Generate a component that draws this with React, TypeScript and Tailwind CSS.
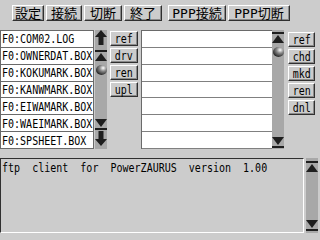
import React from 'react';

const font = "font-['DejaVu_Sans_Mono','Noto_Sans_CJK_JP',monospace]";

const Bm: React.FC<{ children: React.ReactNode; center?: boolean }> = ({ children, center }) => (
  <span
    className={
      center
        ? 'inline-block origin-center scale-x-[0.77] text-[13px] leading-none whitespace-pre'
        : 'inline-block origin-left scale-x-[0.77] text-[13px] leading-none whitespace-pre'
    }
  >
    {children}
  </span>
);

const UpArrow = () => (
  <svg width="12" height="15" viewBox="0 0 12 15">
    <path d="M6 0L12 7H8.5V15H3.5V7H0Z" fill="#1e1e1e" />
  </svg>
);

const DownArrow = () => (
  <svg width="12" height="15" viewBox="0 0 12 15">
    <path d="M6 15L12 8H8.5V0H3.5V8H0Z" fill="#1e1e1e" />
  </svg>
);

const TopIcon = () => (
  <svg width="12" height="11" viewBox="0 0 12 11">
    <rect x="0" y="0" width="12" height="2" fill="#1e1e1e" />
    <path d="M6 3L12 11H0Z" fill="#1e1e1e" />
  </svg>
);

const BottomIcon = () => (
  <svg width="12" height="11" viewBox="0 0 12 11">
    <path d="M0 0H12L6 8Z" fill="#1e1e1e" />
    <rect x="0" y="9" width="12" height="2" fill="#1e1e1e" />
  </svg>
);

const Thumb = ({ id }: { id: string }) => (
  <svg width="11" height="10" viewBox="0 0 11 10">
    <defs>
      <radialGradient id={id} cx="0.65" cy="0.3" r="0.7">
        <stop offset="0" stopColor="#ffffff" />
        <stop offset="0.45" stopColor="#8a8a8a" />
        <stop offset="1" stopColor="#2a2a2a" />
      </radialGradient>
    </defs>
    <ellipse cx="5.5" cy="5" rx="5.5" ry="5" fill={`url(#${id})`} />
  </svg>
);

const ToolButton: React.FC<{ label: string; w: string }> = ({ label, w }) => (
  <div
    className={`${w} h-[16px] flex items-center justify-center text-[13px] leading-none border border-t-white border-l-white border-r-[#303030] border-b-[#303030] shadow-[inset_-1px_-1px_0_#8a8a8a]`}
  >
    {label}
  </div>
);

const SmallButton: React.FC<{ label: string }> = ({ label }) => (
  <div className="h-[15px] flex items-center justify-center border border-t-white border-l-white border-r-[#303030] border-b-[#303030] shadow-[inset_-1px_-1px_0_#8a8a8a]">
    <Bm center>{label}</Bm>
  </div>
);

const files = [
  'F0:COM02.LOG',
  'F0:OWNERDAT.BOX',
  'F0:KOKUMARK.BOX',
  'F0:KANWMARK.BOX',
  'F0:EIWAMARK.BOX',
  'F0:WAEIMARK.BOX',
  'F0:SPSHEET.BOX',
];

export default function App() {
  return (
    <div className={`w-[320px] h-[240px] bg-[#cccccc] text-black overflow-hidden flex flex-col ${font}`}>
      {/* toolbar */}
      <div className="flex pt-[5px] pl-[12px] gap-[2px]">
        <ToolButton label="設定" w="w-[32px]" />
        <ToolButton label="接続" w="w-[36px]" />
        <ToolButton label="切断" w="w-[38px]" />
        <ToolButton label="終了" w="w-[38px]" />
        <div className="w-[2px]" />
        <ToolButton label="PPP接続" w="w-[58px]" />
        <ToolButton label="PPP切断" w="w-[62px]" />
      </div>

      {/* lists */}
      <div className="flex mt-[9px] h-[119px]">
        <div className="w-[94px] flex flex-col border-t border-[#6a6a6a]">
          {files.map((f) => (
            <div
              key={f}
              className="h-[17px] bg-white border-l border-r border-b border-[#6a6a6a] flex items-center pl-[1px] overflow-hidden"
            >
              <Bm>{f}</Bm>
            </div>
          ))}
        </div>
        <div className="w-[12px] ml-[1px] bg-[#a8a8a8] flex flex-col items-center">
          <UpArrow />
          <div className="mt-[5px]">
            <TopIcon />
          </div>
          <div className="mt-[4px]">
            <Thumb id="t1" />
          </div>
          <div className="flex-1" />
          <BottomIcon />
          <div className="mt-[1px] mb-[3px]">
            <DownArrow />
          </div>
        </div>
        <div className="w-[28px] ml-[3px] flex flex-col gap-[2px] pt-[1px]">
          <SmallButton label="ref" />
          <SmallButton label="drv" />
          <SmallButton label="ren" />
          <SmallButton label="upl" />
        </div>
        <div className="w-[131px] ml-[3px] flex flex-col border-l border-t border-[#6a6a6a]">
          {Array.from({ length: 7 }).map((_, i) => (
            <div key={i} className="h-[17px] bg-white border-b border-[#808080]" />
          ))}
        </div>
        <div className="w-[12px] bg-[#a8a8a8] flex flex-col items-center pt-[2px] pb-[1px]">
          <TopIcon />
          <div className="mt-[4px]">
            <Thumb id="t2" />
          </div>
          <div className="flex-1" />
          <BottomIcon />
        </div>
        <div className="w-[27px] ml-[4px] flex flex-col gap-[2px] pt-[2px]">
          <SmallButton label="ref" />
          <SmallButton label="chd" />
          <SmallButton label="mkd" />
          <SmallButton label="ren" />
          <SmallButton label="dnl" />
        </div>
      </div>

      {/* console */}
      <div className="flex mt-[9px] h-[75px]">
        <div className="w-[304px] flex items-start leading-none border border-t-[#303030] border-l-[#303030] border-r-white border-b-white bg-[#cccccc] pl-[1px] pt-[2px]">
          <Bm>ftp  client  for  PowerZAURUS  version  1.00</Bm>
        </div>
        <div className="w-[12px] ml-[2px] bg-[#a8a8a8] flex flex-col items-center pt-[3px] pb-[2px]">
          <TopIcon />
          <div className="flex-1" />
          <BottomIcon />
        </div>
      </div>
    </div>
  );
}
